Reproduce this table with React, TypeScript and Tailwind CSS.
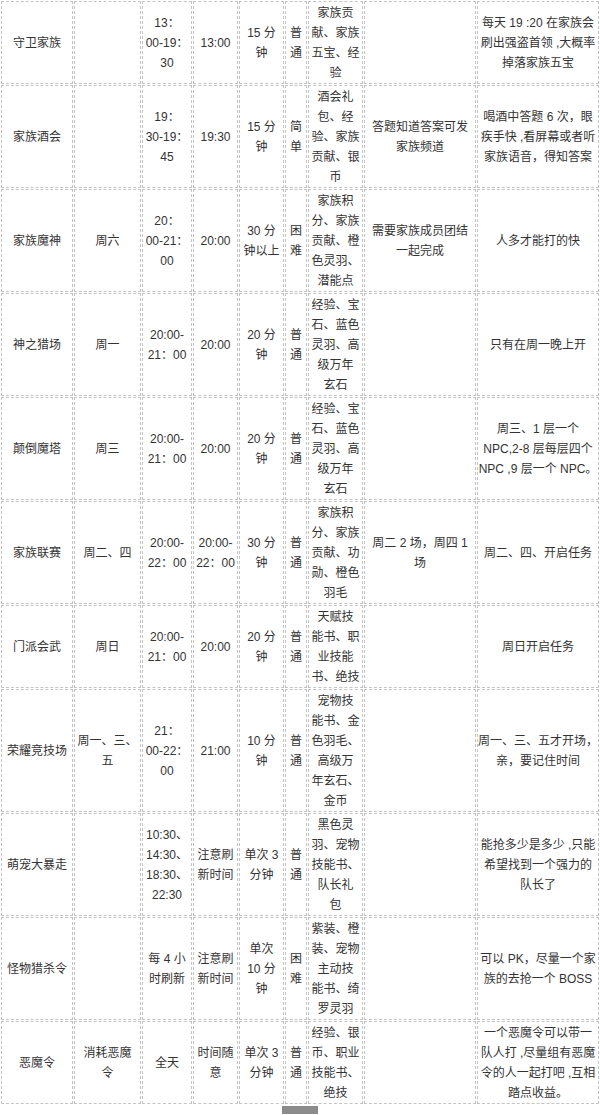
import React from "react";

type Row = string[][];

const rows: Row[] = [
  [["守卫家族"], [], ["13：", "00-19：", "30"], ["13:00"], ["15 分", "钟"], ["普", "通"], ["家族贡", "献、家族", "五宝、经", "验"], [], ["每天 19 :20 在家族会", "刷出强盗首领 ,大概率", "掉落家族五宝"]],
  [["家族酒会"], [], ["19：", "30-19：", "45"], ["19:30"], ["15 分", "钟"], ["简", "单"], ["酒会礼", "包、经", "验、家族", "贡献、银", "币"], ["答题知道答案可发", "家族频道"], ["喝酒中答题 6 次，眼", "疾手快 ,看屏幕或者听", "家族语音，得知答案"]],
  [["家族魔神"], ["周六"], ["20：", "00-21：", "00"], ["20:00"], ["30 分", "钟以上"], ["困", "难"], ["家族积", "分、家族", "贡献、橙", "色灵羽、", "潜能点"], ["需要家族成员团结", "一起完成"], ["人多才能打的快"]],
  [["神之猎场"], ["周一"], ["20:00-", "21：00"], ["20:00"], ["20 分", "钟"], ["普", "通"], ["经验、宝", "石、蓝色", "灵羽、高", "级万年", "玄石"], [], ["只有在周一晚上开"]],
  [["颠倒魔塔"], ["周三"], ["20:00-", "21：00"], ["20:00"], ["20 分", "钟"], ["普", "通"], ["经验、宝", "石、蓝色", "灵羽、高", "级万年", "玄石"], [], ["周三、1 层一个", "NPC,2-8 层每层四个", "NPC ,9 层一个 NPC。"]],
  [["家族联赛"], ["周二、四"], ["20:00-", "22：00"], ["20:00-", "22：00"], ["30 分", "钟"], ["普", "通"], ["家族积", "分、家族", "贡献、功", "勋、橙色", "羽毛"], ["周二 2 场，周四 1", "场"], ["周二、四、开启任务"]],
  [["门派会武"], ["周日"], ["20:00-", "21：00"], ["20:00"], ["20 分", "钟"], ["普", "通"], ["天赋技", "能书、职", "业技能", "书、绝技"], [], ["周日开启任务"]],
  [["荣耀竞技场"], ["周一、三、", "五"], ["21：", "00-22：", "00"], ["21:00"], ["10 分", "钟"], ["普", "通"], ["宠物技", "能书、金", "色羽毛、", "高级万", "年玄石、", "金币"], [], ["周一、三、五才开场，", "亲，要记住时间"]],
  [["萌宠大暴走"], [], ["10:30、", "14:30、", "18:30、", "22:30"], ["注意刷", "新时间"], ["单次 3", "分钟"], ["普", "通"], ["黑色灵", "羽、宠物", "技能书、", "队长礼", "包"], [], ["能抢多少是多少 ,只能", "希望找到一个强力的", "队长了"]],
  [["怪物猎杀令"], [], ["每 4 小", "时刷新"], ["注意刷", "新时间"], ["单次", "10 分", "钟"], ["困", "难"], ["紫装、橙", "装、宠物", "主动技", "能书、绮", "罗灵羽"], [], ["可以 PK，尽量一个家", "族的去抢一个 BOSS"]],
  [["恶魔令"], ["消耗恶魔", "令"], ["全天"], ["时间随", "意"], ["单次 3", "分钟"], ["普", "通"], ["经验、银", "币、职业", "技能书、", "绝技"], [], ["一个恶魔令可以带一", "队人打 ,尽量组有恶魔", "令的人一起打吧 ,互相", "踏点收益。"]],
];

export default function App() {
  return (
    <div
      className="w-[600px] h-[1115px] bg-white overflow-hidden text-[12px] leading-[20px] text-[#333333]"
      style={{ fontFamily: '"Liberation Sans", "Noto Sans CJK SC", sans-serif' }}
    >
      <div className="grid grid-cols-[72px_67px_50px_45px_45px_22px_55px_112px_122px] gap-px pl-px pt-px">
        {rows.map((row, ri) =>
          row.map((cell, ci) => (
            <div
              key={`${ri}-${ci}`}
              className="border border-dashed border-[#c4c4c4] pt-px flex flex-col items-center justify-center text-center"
            >
              {cell.map((line, li) => (
                <div key={li} className="whitespace-nowrap">
                  {line}
                </div>
              ))}
            </div>
          ))
        )}
      </div>
      <div className="flex justify-center pt-[2px]">
        <div className="ml-[0px] w-[36px] h-[8px] bg-[#8c8c8c]" />
      </div>
    </div>
  );
}
